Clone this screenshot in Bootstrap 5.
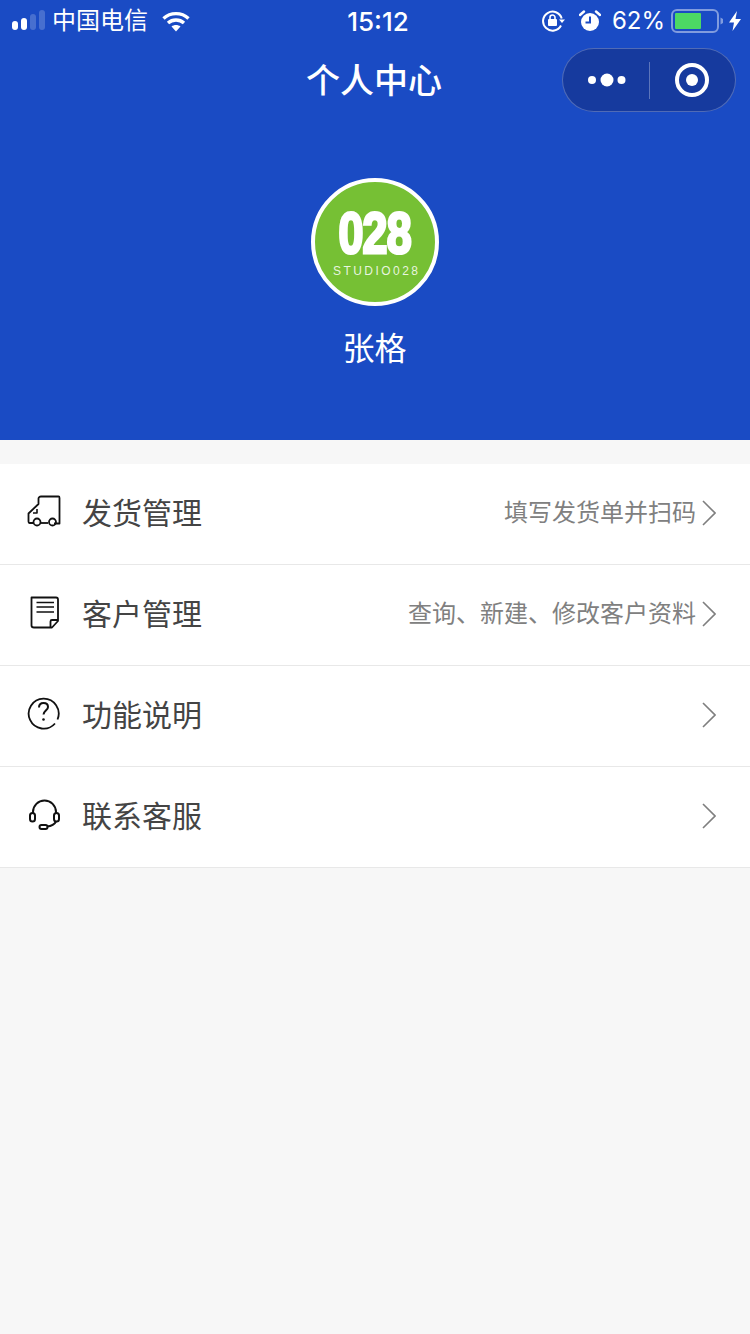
<!DOCTYPE html>
<html lang="zh">
<head>
  <meta charset="UTF-8">
  <meta name="viewport" content="width=device-width, initial-scale=1.0">
  <title>个人中心</title>
  <link href="https://cdn.jsdelivr.net/npm/bootstrap@5.3.0/dist/css/bootstrap.min.css" rel="stylesheet">
  <style>
    body {
      background-color: #f7f7f7;
      font-family: "Inter", "Noto Sans CJK SC", sans-serif;
      height: 1334px;
      overflow: hidden;
    }

    .profile-head {
      background-color: #1a4bc4;
      color: #fff;
      height: 440px;
    }

    .status-row {
      height: 40px;
      padding: 2px 9px 0 12px;
    }

    .status-side {
      flex: 1 1 0;
    }

    .signal-bars {
      margin-bottom: 2px;
    }

    .carrier {
      font-size: 24px;
      margin-left: 7px;
      margin-right: 14px;
    }

    .clock {
      font-size: 26px;
      font-weight: 500;
      padding-left: 3px;
    }

    .alarm-icon {
      margin-left: 13px;
    }

    .percent {
      font-size: 24px;
      margin: 0 6px 0 11px;
    }

    .bolt-icon {
      margin-left: 6px;
    }

    .title-row {
      height: 80px;
    }

    .page-title {
      font-size: 34px;
      font-weight: 500;
      padding-right: 2px;
    }

    .capsule {
      position: absolute;
      right: 14px;
      top: 8px;
      width: 174px;
      height: 64px;
      border-radius: 32px;
      background-color: #163a9e;
      border: 1px solid rgba(255, 255, 255, .25);
    }

    .capsule-part {
      flex: 1 1 0;
    }

    .more-dots {
      margin-left: 3px;
    }

    .capsule-line {
      width: 1px;
      height: 37px;
      background-color: rgba(255, 255, 255, .3);
    }

    .avatar-ring {
      width: 128px;
      height: 128px;
      margin-top: 58px;
      border: 4px solid #fff;
      border-radius: 50%;
      background-color: #76c034;
    }

    .user-name {
      font-size: 32px;
      margin-top: 19px;
      line-height: 48px;
      padding-right: 1px;
    }

    .menu-box {
      margin-top: 24px;
    }

    .menu-row {
      height: 101px;
      padding: 0 34px 2px 26px;
      background-color: #fff;
      border: 0;
      border-bottom: 1px solid #e8e8e8;
      border-radius: 0 !important;
    }

    .menu-icon {
      width: 36px;
      height: 36px;
      margin-right: 20px;
      margin-bottom: 2px;
    }

    .menu-name {
      font-size: 30px;
      color: #444;
    }

    .menu-hint {
      font-size: 24px;
      color: #808080;
      margin-right: 6px;
    }
  </style>
</head>
<body>
  <div class="profile-head d-flex flex-column">
    <div class="status-row d-flex align-items-center">
      <div class="status-side d-flex align-items-center">
        <svg class="signal-bars" width="33" height="20" viewBox="0 0 33 20">
          <rect x="0" y="11" width="6" height="9" rx="3" fill="#fff"/>
          <rect x="9" y="8" width="6" height="12" rx="3" fill="#fff"/>
          <rect x="18" y="4" width="6" height="16" rx="3" fill="#fff" fill-opacity=".2"/>
          <rect x="27" y="0" width="6" height="20" rx="3" fill="#fff" fill-opacity=".2"/>
        </svg>
        <span class="carrier">中国电信</span>
        <svg width="28" height="21" viewBox="0 0 28 21" fill="none" stroke="#fff" stroke-width="3.4">
          <path d="M1.5 7.5C8.5 1 19.5 1 26.5 7.5"/>
          <path d="M6 12C10.5 8 17.5 8 22 12"/>
          <path d="M14 20.5L9.5 15.6C12 13.6 16 13.6 18.5 15.6Z" fill="#fff" stroke="none"/>
        </svg>
      </div>
      <div class="clock">15:12</div>
      <div class="status-side d-flex align-items-center justify-content-end">
        <svg width="24" height="22" viewBox="0 0 24 22" fill="none" stroke="#fff" stroke-width="2">
          <path d="M19 15.5A9.5 9.5 0 1 1 19.700 8.500"/>
          <path d="M17 9.500H23L20 13Z" fill="#fff" stroke="none"/>
          <rect x="6" y="9" width="9" height="7" rx="1" fill="#fff" stroke="none"/>
          <path d="M8 9V7.500A2.500 2.500 0 0 1 13 7.500V9" stroke-width="1.600"/>
        </svg>
        <svg class="alarm-icon" width="22" height="22" viewBox="0 0 22 22">
          <circle cx="11" cy="12" r="9" fill="#fff"/>
          <path d="M11 6.500V12.500H6.500" fill="none" stroke="#1a4bc4" stroke-width="2"/>
          <path d="M1 5L5 1.500M21 5L17 1.500" stroke="#fff" stroke-width="2.400" stroke-linecap="round"/>
        </svg>
        <span class="percent">62%</span>
        <svg width="52" height="24" viewBox="0 0 52 24">
          <rect x="1" y="1" width="46" height="22" rx="5" fill="none" stroke="#fff" stroke-opacity=".45" stroke-width="2"/>
          <rect x="4" y="4" width="26" height="16" rx="1" fill="#4cd964"/>
          <path d="M49.500 8.500L52 10V14L49.500 15.500Z" fill="#fff" fill-opacity=".45"/>
        </svg>
        <svg class="bolt-icon" width="12" height="20" viewBox="0 0 12 20">
          <path d="M8 0L0 11.500H5L3.500 20L12 8H6.500Z" fill="#fff"/>
        </svg>
      </div>
    </div>

    <div class="title-row position-relative d-flex align-items-center justify-content-center">
      <div class="page-title">个人中心</div>
      <div class="capsule d-flex align-items-center">
        <div class="capsule-part d-flex align-items-center justify-content-center">
          <svg class="more-dots" width="38" height="14" viewBox="0 0 38 14" fill="#fff">
            <circle cx="4" cy="7" r="4"/>
            <circle cx="19" cy="7" r="6.500"/>
            <circle cx="33.500" cy="7" r="4"/>
          </svg>
        </div>
        <div class="capsule-line"></div>
        <div class="capsule-part d-flex align-items-center justify-content-center">
          <svg width="34" height="34" viewBox="0 0 34 34">
            <circle cx="17" cy="17" r="15" fill="none" stroke="#fff" stroke-width="4"/>
            <circle cx="17" cy="17" r="6" fill="#fff"/>
          </svg>
        </div>
      </div>
    </div>

    <div class="avatar-ring align-self-center d-flex">
      <svg width="120" height="120" viewBox="0 0 120 120" fill="#fff" font-family="Liberation Sans, sans-serif">
        <text transform="translate(23.500 70.500) scale(.8 1.040)" font-size="56" font-weight="700" stroke="#fff" stroke-width="3" letter-spacing="-1">028</text>
        <text x="18" y="93" font-size="12" fill-opacity=".85" textLength="85">STUDIO028</text>
      </svg>
    </div>
    <div class="user-name text-center">张格</div>
  </div>

  <div class="menu-box list-group">
    <a class="menu-row list-group-item d-flex align-items-center">
      <svg class="menu-icon" viewBox="0 0 36 36" fill="none" stroke="#111" stroke-width="1.800" stroke-linejoin="round">
        <path d="M7 29H3.500C2.500 29 2.500 28.400 2.500 27.500V19.500L12.500 10V4.500C12.500 3.500 13.500 2.500 15 2.500H32.500C33.500 2.500 33.500 3 33.500 4V29.500H28"/>
        <path d="M11 15V19H7" stroke-width="1.600"/>
        <circle cx="11" cy="28" r="3.500"/>
        <circle cx="26.500" cy="28" r="3.500"/>
        <path d="M15 29H22"/>
      </svg>
      <span class="menu-name me-auto">发货管理</span>
      <span class="menu-hint">填写发货单并扫码</span>
      <svg width="14" height="26" viewBox="0 0 14 26" fill="none" stroke="#7f7f7f" stroke-width="1.600"><path d="M1 1L13 13L1 25"/></svg>
    </a>
    <a class="menu-row list-group-item d-flex align-items-center">
      <svg class="menu-icon" viewBox="0 0 36 36" fill="none" stroke="#111" stroke-width="1.800" stroke-linejoin="round">
        <path d="M5.500 2.500H30C31.500 2.500 32 3.200 32 4.500V26L26 32.500H8C6.500 32.500 5.500 31.700 5.500 30.500Z"/>
        <path d="M10.500 7.500H28M10.500 12H28M10.500 17H28" stroke-width="1.600"/>
        <path d="M32 25H26C25 25 24.500 25.800 24.500 26.500V32.500"/>
      </svg>
      <span class="menu-name me-auto">客户管理</span>
      <span class="menu-hint">查询、新建、修改客户资料</span>
      <svg width="14" height="26" viewBox="0 0 14 26" fill="none" stroke="#7f7f7f" stroke-width="1.600"><path d="M1 1L13 13L1 25"/></svg>
    </a>
    <a class="menu-row list-group-item d-flex align-items-center">
      <svg class="menu-icon" viewBox="0 0 36 36" fill="none" stroke="#111" stroke-width="1.800">
        <path d="M29 27.500A15 15 0 1 1 31.500 23.500"/>
        <path d="M13 11.500C13 8.500 15 7 17.500 7C20 7 22 8.500 22 11C22 14 18 14.500 17.500 18.500" stroke-width="2"/>
        <circle cx="17.500" cy="23.500" r="1.300" fill="#111" stroke="none"/>
      </svg>
      <span class="menu-name me-auto">功能说明</span>
      <svg width="14" height="26" viewBox="0 0 14 26" fill="none" stroke="#7f7f7f" stroke-width="1.600"><path d="M1 1L13 13L1 25"/></svg>
    </a>
    <a class="menu-row list-group-item d-flex align-items-center">
      <svg class="menu-icon" viewBox="0 0 36 36" fill="none" stroke="#111" stroke-width="2">
        <path d="M7 17V15A11.500 11.500 0 0 1 30 15V17"/>
        <rect x="4" y="16" width="5" height="8.500" rx="2.500"/>
        <rect x="28" y="16" width="5" height="8.500" rx="2.500"/>
        <path d="M30 24.500C28.500 27.500 26 29 21 29.500"/>
        <rect x="13.500" y="28" width="8" height="4" rx="2"/>
      </svg>
      <span class="menu-name me-auto">联系客服</span>
      <svg width="14" height="26" viewBox="0 0 14 26" fill="none" stroke="#7f7f7f" stroke-width="1.600"><path d="M1 1L13 13L1 25"/></svg>
    </a>
  </div>

  <script src="https://cdn.jsdelivr.net/npm/bootstrap@5.3.0/dist/js/bootstrap.bundle.min.js"></script>
</body>
</html>
